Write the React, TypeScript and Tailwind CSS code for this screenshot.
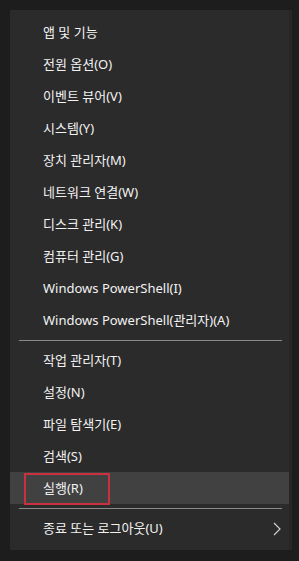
import React from 'react';

type Item = { label: string; highlighted?: boolean; submenu?: boolean };

const groups: Item[][] = [
  [
    { label: '앱 및 기능' },
    { label: '전원 옵션(O)' },
    { label: '이벤트 뷰어(V)' },
    { label: '시스템(Y)' },
    { label: '장치 관리자(M)' },
    { label: '네트워크 연결(W)' },
    { label: '디스크 관리(K)' },
    { label: '컴퓨터 관리(G)' },
    { label: 'Windows PowerShell(I)' },
    { label: 'Windows PowerShell(관리자)(A)' },
  ],
  [
    { label: '작업 관리자(T)' },
    { label: '설정(N)' },
    { label: '파일 탐색기(E)' },
    { label: '검색(S)' },
    { label: '실행(R)', highlighted: true },
  ],
  [{ label: '종료 또는 로그아웃(U)', submenu: true }],
];

const MenuRow: React.FC<{ item: Item }> = ({ item }) => (
  <div
    className={`relative flex h-[32px] items-center justify-between pl-[33px] pr-[8px] ${
      item.highlighted ? 'bg-[#414141]' : ''
    }`}
  >
    <span className="text-[13px] leading-none text-[#f2f2f2]">{item.label}</span>
    {item.highlighted && (
      <div className="absolute left-[14px] top-[1px] h-[32px] w-[86px] border-2 border-[#c8313d]" />
    )}
    {item.submenu && (
      <svg width="8" height="14" viewBox="0 0 8 14" className="mt-[2px]">
        <path d="M1 1 L7 7 L1 13" fill="none" stroke="#cfcfcf" strokeWidth="1.2" />
      </svg>
    )}
  </div>
);

export default function App() {
  return (
    <div
      className="h-[561px] w-[299px] bg-[#1d1d1d] pl-[10px] pt-[10px]"
      style={{ fontFamily: '"Segoe UI", "Noto Sans", "Noto Sans CJK KR", sans-serif' }}
    >
      <div className="flex w-[282px] border-r-[3px] border-r-[#262626]">
        <div className="w-[279px] bg-[#2b2b2b] py-[6px]">
          {groups.map((group, gi) => (
            <div key={gi}>
              {gi > 0 && (
                <div className="flex h-[8px] items-center pl-[9px] pr-[7px]">
                  <div className="h-px w-full bg-[#8a8a8a]" />
                </div>
              )}
              {group.map((item) => (
                <MenuRow key={item.label} item={item} />
              ))}
            </div>
          ))}
        </div>
      </div>
    </div>
  );
}
